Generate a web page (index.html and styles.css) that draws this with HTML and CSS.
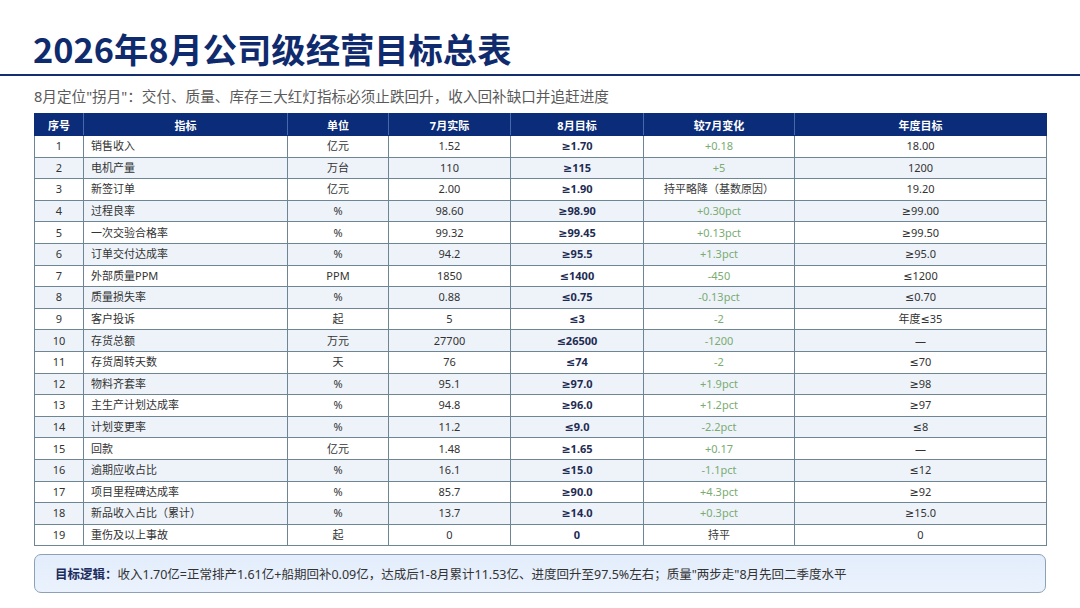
FILE: index.html
```html
<!DOCTYPE html>
<html lang="zh">
<head>
<meta charset="utf-8">
<title>2026年8月公司级经营目标总表</title>
<link rel="stylesheet" href="styles.css">
</head>
<body>
<div class="page">
  <header class="head">
    <h1 class="title">2026年8月公司级经营目标总表</h1>
  </header>
  <div class="rule"></div>
  <main class="content">
    <p class="subtitle">8月定位"拐月"：交付、质量、库存三大红灯指标必须止跌回升，收入回补缺口并追赶进度</p>
    <table class="kpi">
      <colgroup>
        <col class="c1"><col class="c2"><col class="c3"><col class="c4"><col class="c5"><col class="c6"><col class="c7">
      </colgroup>
      <thead>
        <tr><th>序号</th><th>指标</th><th>单位</th><th>7月实际</th><th>8月目标</th><th>较7月变化</th><th>年度目标</th></tr>
      </thead>
      <tbody>
        <tr><td>1</td><td class="name">销售收入</td><td>亿元</td><td>1.52</td><td class="tgt">≥1.70</td><td class="chg">+0.18</td><td>18.00</td></tr>
        <tr><td>2</td><td class="name">电机产量</td><td>万台</td><td>110</td><td class="tgt">≥115</td><td class="chg">+5</td><td>1200</td></tr>
        <tr><td>3</td><td class="name">新签订单</td><td>亿元</td><td>2.00</td><td class="tgt">≥1.90</td><td class="flat">持平略降（基数原因）</td><td>19.20</td></tr>
        <tr><td>4</td><td class="name">过程良率</td><td>%</td><td>98.60</td><td class="tgt">≥98.90</td><td class="chg">+0.30pct</td><td>≥99.00</td></tr>
        <tr><td>5</td><td class="name">一次交验合格率</td><td>%</td><td>99.32</td><td class="tgt">≥99.45</td><td class="chg">+0.13pct</td><td>≥99.50</td></tr>
        <tr><td>6</td><td class="name">订单交付达成率</td><td>%</td><td>94.2</td><td class="tgt">≥95.5</td><td class="chg">+1.3pct</td><td>≥95.0</td></tr>
        <tr><td>7</td><td class="name">外部质量PPM</td><td>PPM</td><td>1850</td><td class="tgt">≤1400</td><td class="chg">-450</td><td>≤1200</td></tr>
        <tr><td>8</td><td class="name">质量损失率</td><td>%</td><td>0.88</td><td class="tgt">≤0.75</td><td class="chg">-0.13pct</td><td>≤0.70</td></tr>
        <tr><td>9</td><td class="name">客户投诉</td><td>起</td><td>5</td><td class="tgt">≤3</td><td class="chg">-2</td><td>年度≤35</td></tr>
        <tr><td>10</td><td class="name">存货总额</td><td>万元</td><td>27700</td><td class="tgt">≤26500</td><td class="chg">-1200</td><td>—</td></tr>
        <tr><td>11</td><td class="name">存货周转天数</td><td>天</td><td>76</td><td class="tgt">≤74</td><td class="chg">-2</td><td>≤70</td></tr>
        <tr><td>12</td><td class="name">物料齐套率</td><td>%</td><td>95.1</td><td class="tgt">≥97.0</td><td class="chg">+1.9pct</td><td>≥98</td></tr>
        <tr><td>13</td><td class="name">主生产计划达成率</td><td>%</td><td>94.8</td><td class="tgt">≥96.0</td><td class="chg">+1.2pct</td><td>≥97</td></tr>
        <tr><td>14</td><td class="name">计划变更率</td><td>%</td><td>11.2</td><td class="tgt">≤9.0</td><td class="chg">-2.2pct</td><td>≤8</td></tr>
        <tr><td>15</td><td class="name">回款</td><td>亿元</td><td>1.48</td><td class="tgt">≥1.65</td><td class="chg">+0.17</td><td>—</td></tr>
        <tr><td>16</td><td class="name">逾期应收占比</td><td>%</td><td>16.1</td><td class="tgt">≤15.0</td><td class="chg">-1.1pct</td><td>≤12</td></tr>
        <tr><td>17</td><td class="name">项目里程碑达成率</td><td>%</td><td>85.7</td><td class="tgt">≥90.0</td><td class="chg">+4.3pct</td><td>≥92</td></tr>
        <tr><td>18</td><td class="name">新品收入占比（累计）</td><td>%</td><td>13.7</td><td class="tgt">≥14.0</td><td class="chg">+0.3pct</td><td>≥15.0</td></tr>
        <tr><td>19</td><td class="name">重伤及以上事故</td><td>起</td><td>0</td><td class="tgt">0</td><td class="flat">持平</td><td>0</td></tr>
      </tbody>
    </table>
    <div class="logic"><b>目标逻辑：</b>收入1.70亿=正常排产1.61亿+船期回补0.09亿，达成后1-8月累计11.53亿、进度回升至97.5%左右；质量"两步走"8月先回二季度水平</div>
  </main>
</div>
</body>
</html>
```
FILE: styles.css
```css
html, body {
  margin: 0;
  padding: 0;
  background: #ffffff;
}
body {
  font-family: "Noto Sans", "DejaVu Sans", "Noto Sans CJK SC", sans-serif;
  color: #333333;
}
.page {
  width: 1080px;
  height: 608px;
  overflow: hidden;
}
.head {
  padding: 28px 0 0 33px;
  height: 46px;
}
.title {
  margin: 0;
  font-family: "Noto Sans CJK SC", sans-serif;
  font-size: 34.3px;
  line-height: 40px;
  font-weight: 700;
  color: #0f2b6e;
}
.rule {
  height: 2px;
  background: #142f6c;
}
.content {
  padding: 9px 34px 0 34px;
}
.subtitle {
  margin: 0;
  font-size: 14.6px;
  line-height: 22px;
  color: #5a5a5a;
  height: 28px;
}
.kpi {
  width: 1012px;
  border-collapse: collapse;
  table-layout: fixed;
  font-size: 11px;
}
.c1 { width: 49px; }
.c2 { width: 204px; }
.c3 { width: 101px; }
.c4 { width: 122px; }
.c5 { width: 133px; }
.c6 { width: 151px; }
.c7 { width: 252px; }
.kpi th {
  background: #0b2c78;
  color: #ffffff;
  font-weight: 700;
  font-size: 11px;
  height: 21px;
  padding: 0;
  border-left: 1px solid #4669ad;
  border-right: 1px solid #4669ad;
  border-top: 1px solid #0b2c78;
  border-bottom: 1px solid #0b2c78;
  text-align: center;
}
.kpi th:first-child { border-left-color: #0b2c78; }
.kpi th:last-child { border-right-color: #0b2c78; }
.kpi td {
  height: 20.6px;
  padding: 0;
  border: 1px solid #6e8593;
  text-align: center;
  color: #333333;
  line-height: 14px;
}
.kpi tbody tr:nth-child(even) td {
  background: #eef3fa;
}
.kpi td.name {
  text-align: left;
  padding-left: 7px;
}
.kpi td.tgt {
  font-weight: 700;
  color: #1e2b52;
}
.kpi td.chg {
  color: #7aab72;
}
.kpi td.flat {
  color: #3a3a3a;
}
.logic {
  margin-top: 8px;
  height: 39px;
  box-sizing: border-box;
  border: 1px solid #8da1b5;
  border-radius: 7px;
  background: linear-gradient(180deg, #e3edfb 0%, #eaf2fd 100%);
  padding: 0 0 0 20px;
  display: flex;
  align-items: center;
  font-size: 12.5px;
  color: #333333;
}
.logic b {
  color: #1b2c5c;
  font-weight: 700;
}
```
